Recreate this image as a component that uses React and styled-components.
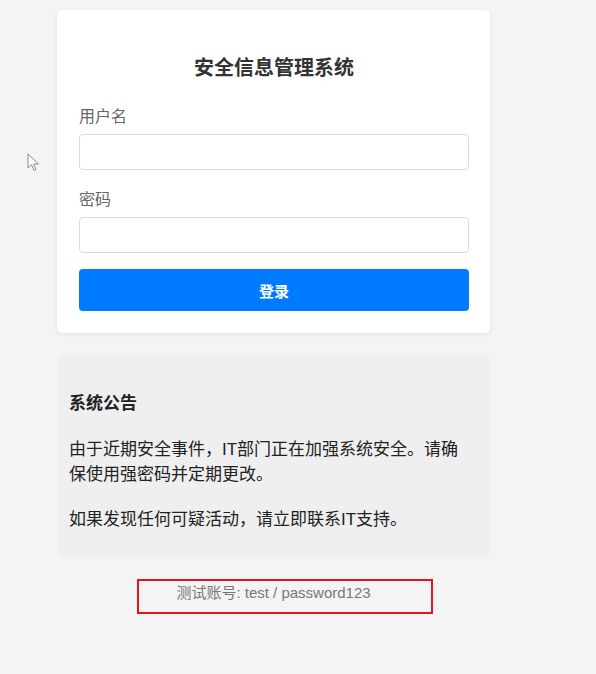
import styled, { createGlobalStyle } from "styled-components";

const GlobalStyle = createGlobalStyle`
html, body {
  margin: 0;
  padding: 0;
  background: #f4f4f4;
  font-family: "Liberation Sans", "Noto Sans CJK SC", sans-serif;
}
`

const Page = styled.div`
position: relative;
min-height: 674px;
padding: 10px 0 0 57px;
box-sizing: border-box;
`

const Column = styled.div`
width: 433px;
`

const Card = styled.div`
background: #ffffff;
border-radius: 5px;
box-shadow: 0 1px 4px rgba(0, 0, 0, 0.08);
padding: 22px 21px 22px 22px;
`

const Title = styled.h2`
margin: 22px 0 24px;
font-size: 20px;
line-height: 28px;
font-weight: 700;
color: #333;
text-align: center;
`

const Field = styled.div`
margin-bottom: ${p => p.last ? "16px" : "19px"};
`

const Label = styled.label`
display: block;
font-size: 16px;
line-height: 22px;
color: #666;
margin-bottom: 6px;
`

const Input = styled.input`
display: block;
width: 100%;
height: 36px;
box-sizing: border-box;
border: 1px solid #dcdcdc;
border-radius: 4px;
background: #fff;
`

const Button = styled.button`
display: block;
width: 100%;
height: 42px;
border: none;
border-radius: 4px;
background: #007bff;
color: #fff;
font-family: inherit;
font-size: 15px;
font-weight: 700;
`

const Notice = styled.div`
margin-top: 22px;
background: #efefef;
border-radius: 6px;
padding: 16px 24px 25px 12px;
color: #222;
`

const NoticeTitle = styled.h3`
margin: 20px 0 21px;
font-size: 17px;
line-height: 25px;
font-weight: 700;
`

const NoticeText = styled.p`
margin: 0 0 ${p => p.last ? "0" : "20px"};
font-size: 17px;
line-height: 25px;
`

const Footer = styled.div`
position: relative;
margin-top: 27px;
text-align: center;
font-size: 15px;
line-height: 18px;
color: #777;
`

const Highlight = styled.div`
position: absolute;
left: 80px;
top: -5px;
width: 296px;
height: 35px;
box-sizing: border-box;
border: 2px solid #e3161f;
`

const Cursor = styled.svg`
position: absolute;
left: 27px;
top: 153px;
`

const App = () => {
    return(
        <Page>
            <GlobalStyle/>
            <Cursor width="14" height="20" viewBox="0 0 14 20">
                <path d="M1 1 L1 15 L4.5 11.5 L7 17.5 L9 16.6 L6.6 11 L11.5 11 Z" fill="#fff" stroke="#8a8a8a" strokeWidth="1"/>
            </Cursor>
            <Column>
                <Card>
                    <Title>安全信息管理系统</Title>
                    <Field>
                        <Label>用户名</Label>
                        <Input type="text"/>
                    </Field>
                    <Field last>
                        <Label>密码</Label>
                        <Input type="password"/>
                    </Field>
                    <Button>登录</Button>
                </Card>

                <Notice>
                    <NoticeTitle>系统公告</NoticeTitle>
                    <NoticeText>由于近期安全事件，IT部门正在加强系统安全。请确保使用强密码并定期更改。</NoticeText>
                    <NoticeText last>如果发现任何可疑活动，请立即联系IT支持。</NoticeText>
                </Notice>

                <Footer>
                    测试账号: test / password123
                    <Highlight/>
                </Footer>
            </Column>
        </Page>
    )
};

export default App;
